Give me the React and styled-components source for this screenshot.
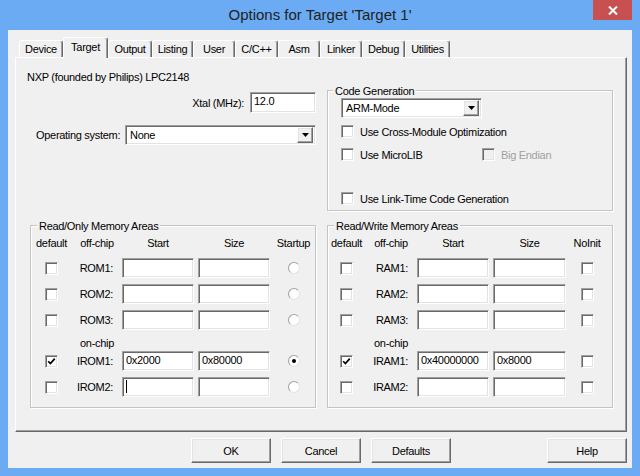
import React from "react";
import styled, { createGlobalStyle, css } from "styled-components";

const GlobalStyle = createGlobalStyle`
  html, body {
    margin: 0;
    padding: 0;
    background: #6aabf4;
  }
  body {
    font-family: "Liberation Sans", Arial, sans-serif;
    font-size: 11px;
    letter-spacing: -0.3px;
    color: #000;
  }
`;

const sunken = css`
  box-sizing: border-box;
  border: 1px solid;
  border-color: #a0a0a0 #ffffff #ffffff #a0a0a0;
  box-shadow: inset 1px 1px 0 #696969, inset -1px -1px 0 #e3e3e3;
`;

const raised = css`
  box-sizing: border-box;
  border: 1px solid;
  border-color: #ffffff #696969 #696969 #ffffff;
  box-shadow: inset -1px -1px 0 #a0a0a0, inset 1px 1px 0 #e3e3e3;
  background: #f0f0f0;
`;

const Window = styled.div`
  width: 640px;
  height: 476px;
  box-sizing: border-box;
  padding: 0 8px 8px;
  background: #6aabf4;
  display: flex;
  flex-direction: column;
  overflow: hidden;
`;

const TitleBar = styled.div`
  height: 30px;
  margin: 0 -8px;
  flex-shrink: 0;
  display: grid;
  grid-template-columns: 1fr auto 1fr;
`;

const Title = styled.div`
  grid-column: 2;
  font-size: 15px;
  letter-spacing: 0;
  line-height: 30px;
  color: #222;
`;

const CloseButton = styled.div`
  justify-self: end;
  align-self: start;
  width: 39px;
  height: 20px;
  margin-right: 8px;
  background: #c75050;
  display: flex;
  align-items: center;
  justify-content: center;
`;

const Client = styled.div`
  flex: 1;
  background: #f0f0f0;
  padding: 7px 5px 0 7px;
  display: flex;
  flex-direction: column;
`;

const TabStrip = styled.div`
  display: flex;
  align-items: flex-end;
  height: 20px;
  padding-left: 4px;
  position: relative;
  z-index: 1;
`;

const Tab = styled.div`
  width: ${(p) => p.$w}px;
  height: ${(p) => (p.$active ? 21 : 17)}px;
  margin-bottom: ${(p) => (p.$active ? -1 : 0)}px;
  padding-bottom: ${(p) => (p.$active ? 2 : 0)}px;
  box-sizing: border-box;
  border: 1px solid;
  border-bottom: none;
  border-color: #ffffff #696969 transparent #ffffff;
  border-radius: 3px 3px 0 0;
  box-shadow: inset -1px 0 0 #a0a0a0;
  background: #f0f0f0;
  display: flex;
  align-items: center;
  justify-content: center;
`;

const Panel = styled.div`
  height: 375px;
  box-sizing: border-box;
  border: 1px solid;
  border-color: #ffffff #696969 #696969 #ffffff;
  box-shadow: inset -1px -1px 0 #a0a0a0;
  padding: 12px 0 0 14px;
  display: grid;
  grid-template-columns: 286px 286px;
  column-gap: 11px;
  row-gap: 14px;
  align-content: start;
`;

const DeviceInfo = styled.div`
  display: flex;
  flex-direction: column;
`;

const DeviceName = styled.div`
  margin-left: -3px;
  line-height: 14px;
`;

const XtalRow = styled.div`
  display: flex;
  justify-content: flex-end;
  align-items: center;
  gap: 6px;
  margin-top: 8px;
`;

const OsRow = styled.div`
  display: flex;
  align-items: center;
  margin-top: 12px;
  padding-left: 6px;
`;

const Field = styled.div`
  ${sunken};
  align-self: end;
  width: ${(p) => (p.$w ? `${p.$w}px` : "100%")};
  height: ${(p) => p.$h || 20}px;
  background: #fff;
  padding: 1px 3px 0;
  line-height: 14px;
  white-space: nowrap;
  overflow: hidden;
`;

const Caret = styled.span`
  display: inline-block;
  width: 1px;
  height: 13px;
  margin-top: 1px;
  background: #000;
`;

const Select = styled.div`
  ${sunken};
  width: ${(p) => p.$w}px;
  height: 20px;
  margin-left: ${(p) => (p.$push ? "auto" : "0")};
  background: #fff;
  display: flex;
  align-items: center;
  padding: 2px 2px 2px 4px;
`;

const SelectText = styled.span`
  flex: 1;
`;

const SelectButton = styled.span`
  ${raised};
  width: 16px;
  height: 16px;
  display: flex;
  align-items: center;
  justify-content: center;
`;

const GroupBox = styled.div`
  box-sizing: border-box;
  height: ${(p) => (p.$h ? `${p.$h}px` : "auto")};
  margin-top: ${(p) => p.$mt || 0}px;
  border: 1px solid #c4c4c4;
  box-shadow: inset 1px 1px 0 #fff, 1px 1px 0 #fff;
`;

const Caption = styled.div`
  width: fit-content;
  margin: -7px 0 0 ${(p) => p.$ml || 6}px;
  padding: 0 2px;
  line-height: 14px;
  background: #f0f0f0;
`;

const CodeGenBody = styled.div`
  padding-left: 13px;
`;

const CheckRow = styled.div`
  display: flex;
  align-items: center;
  height: 15px;
  margin-top: ${(p) => p.$mt}px;
`;

const CheckItem = styled.label`
  display: flex;
  align-items: center;
  gap: 6px;
  width: ${(p) => (p.$w ? `${p.$w}px` : "auto")};
  color: ${(p) => (p.$disabled ? "#a0a0a0" : "#000")};
`;

const Box = styled.span`
  ${sunken};
  width: 13px;
  height: 13px;
  flex-shrink: 0;
  background: ${(p) => (p.$disabled ? "#f0f0f0" : "#fff")};
  display: flex;
  align-items: center;
  justify-content: center;
`;

const RadioDot = styled.span`
  box-sizing: border-box;
  width: 12px;
  height: 12px;
  border-radius: 50%;
  border: 1px solid;
  border-color: #a0a0a0 #e3e3e3 #e3e3e3 #a0a0a0;
  background: #fff;
  display: flex;
  align-items: center;
  justify-content: center;

  &::after {
    content: "";
    width: 4px;
    height: 4px;
    border-radius: 50%;
    background: ${(p) => (p.$on ? "#000" : "transparent")};
  }
`;

const MemGrid = styled.div`
  display: grid;
  grid-template-columns: ${(p) => p.$cols};
  grid-template-rows: 20px 25px 26px 26px 20px 21px 26px;
  column-gap: 4px;
  padding-bottom: 10px;
`;

const HeadCell = styled.div`
  align-self: center;
  justify-self: center;
  line-height: 14px;
  white-space: nowrap;
`;

const Cell = styled.div`
  grid-column: ${(p) => p.$col || "auto"};
  align-self: end;
  height: 20px;
  display: flex;
  align-items: center;
  justify-content: ${(p) => p.$justify || "center"};
  padding-right: ${(p) => p.$pr || 0}px;
  white-space: nowrap;
`;

const OnChip = styled.div`
  grid-column: 2;
  align-self: end;
  justify-self: center;
  line-height: 14px;
`;

const ButtonRow = styled.div`
  margin-top: 6px;
  display: grid;
  grid-template-columns: 1fr auto 1fr;
`;

const ButtonGroup = styled.div`
  grid-column: 2;
  display: flex;
  gap: 10px;
`;

const Button = styled.button`
  ${raised};
  width: 80px;
  height: 25px;
  padding: 0;
  font: inherit;
  letter-spacing: inherit;
  color: #000;
  justify-self: ${(p) => (p.$end ? "end" : "auto")};
`;

const tabs = [
  { name: "Device", w: 44 },
  { name: "Target", w: 45, active: true },
  { name: "Output", w: 44 },
  { name: "Listing", w: 41 },
  { name: "User", w: 42 },
  { name: "C/C++", w: 43 },
  { name: "Asm", w: 42 },
  { name: "Linker", w: 42 },
  { name: "Debug", w: 43 },
  { name: "Utilities", w: 45 },
];

const romAreas = {
  title: "Read/Only Memory Areas",
  cols: "41px 42px 72px 72px 39px",
  last: "Startup",
  lastKind: "radio",
  off: [
    { label: "ROM1:" },
    { label: "ROM2:" },
    { label: "ROM3:" },
  ],
  on: [
    { label: "IROM1:", def: true, start: "0x2000", size: "0x80000", last: true },
    { label: "IROM2:", caret: true },
  ],
};

const ramAreas = {
  title: "Read/Write Memory Areas",
  cols: "37px 44px 72px 73px 34px",
  last: "NoInit",
  lastKind: "check",
  off: [
    { label: "RAM1:" },
    { label: "RAM2:" },
    { label: "RAM3:" },
  ],
  on: [
    { label: "IRAM1:", def: true, start: "0x40000000", size: "0x8000" },
    { label: "IRAM2:" },
  ],
};

function Check({ checked, disabled }) {
  return (
    <Box $disabled={disabled}>
      {checked && (
        <svg width="9" height="9" viewBox="0 0 9 9">
          <path d="M1.2 4.2 L3.4 6.6 L7.8 1.6" fill="none" stroke="#000" strokeWidth="1.7" />
        </svg>
      )}
    </Box>
  );
}

function Arrow() {
  return (
    <svg width="7" height="4" viewBox="0 0 7 4">
      <polygon points="0,0 7,0 3.5,4" fill="#000" />
    </svg>
  );
}

function MemRow({ row, lastKind }) {
  return (
    <>
      <Cell $col={1}>
        <Check checked={row.def} />
      </Cell>
      <Cell $justify="flex-end" $pr={5}>
        {row.label}
      </Cell>
      <Field>{row.caret ? <Caret /> : row.start}</Field>
      <Field>{row.size}</Field>
      <Cell>{lastKind === "radio" ? <RadioDot $on={row.last} /> : <Check checked={row.last} />}</Cell>
    </>
  );
}

function MemGroup({ area }) {
  return (
    <GroupBox>
      <Caption>{area.title}</Caption>
      <MemGrid $cols={area.cols}>
        <HeadCell>default</HeadCell>
        <HeadCell>off-chip</HeadCell>
        <HeadCell>Start</HeadCell>
        <HeadCell>Size</HeadCell>
        <HeadCell>{area.last}</HeadCell>
        {area.off.map((r) => (
          <MemRow key={r.label} row={r} lastKind={area.lastKind} />
        ))}
        <OnChip>on-chip</OnChip>
        {area.on.map((r) => (
          <MemRow key={r.label} row={r} lastKind={area.lastKind} />
        ))}
      </MemGrid>
    </GroupBox>
  );
}

export default function App() {
  return (
    <>
      <GlobalStyle />
      <Window>
        <TitleBar>
          <Title>Options for Target 'Target 1'</Title>
          <CloseButton>
            <svg width="10" height="9" viewBox="0 0 10 9">
              <path d="M1 0.5 L9 8.5 M9 0.5 L1 8.5" stroke="#fff" strokeWidth="2" />
            </svg>
          </CloseButton>
        </TitleBar>
        <Client>
          <TabStrip>
            {tabs.map((t) => (
              <Tab key={t.name} $w={t.w} $active={t.active}>
                {t.name}
              </Tab>
            ))}
          </TabStrip>
          <Panel>
            <DeviceInfo>
              <DeviceName>NXP (founded by Philips) LPC2148</DeviceName>
              <XtalRow>
                <span>Xtal (MHz):</span>
                <Field $w={66} $h={21}>12.0</Field>
              </XtalRow>
              <OsRow>
                <span>Operating system:</span>
                <Select $w={191} $push>
                  <SelectText>None</SelectText>
                  <SelectButton>
                    <Arrow />
                  </SelectButton>
                </Select>
              </OsRow>
            </DeviceInfo>
            <GroupBox $h={121} $mt={20}>
              <Caption $ml={5}>Code Generation</Caption>
              <CodeGenBody>
                <Select $w={141}>
                  <SelectText>ARM-Mode</SelectText>
                  <SelectButton>
                    <Arrow />
                  </SelectButton>
                </Select>
                <CheckRow $mt={6}>
                  <CheckItem>
                    <Check />
                    Use Cross-Module Optimization
                  </CheckItem>
                </CheckRow>
                <CheckRow $mt={8}>
                  <CheckItem $w={141}>
                    <Check />
                    Use MicroLIB
                  </CheckItem>
                  <CheckItem $disabled>
                    <Check disabled />
                    Big Endian
                  </CheckItem>
                </CheckRow>
                <CheckRow $mt={29}>
                  <CheckItem>
                    <Check />
                    Use Link-Time Code Generation
                  </CheckItem>
                </CheckRow>
              </CodeGenBody>
            </GroupBox>
            <MemGroup area={romAreas} />
            <MemGroup area={ramAreas} />
          </Panel>
          <ButtonRow>
            <ButtonGroup>
              <Button>OK</Button>
              <Button>Cancel</Button>
              <Button>Defaults</Button>
            </ButtonGroup>
            <Button $end>Help</Button>
          </ButtonRow>
        </Client>
      </Window>
    </>
  );
}
